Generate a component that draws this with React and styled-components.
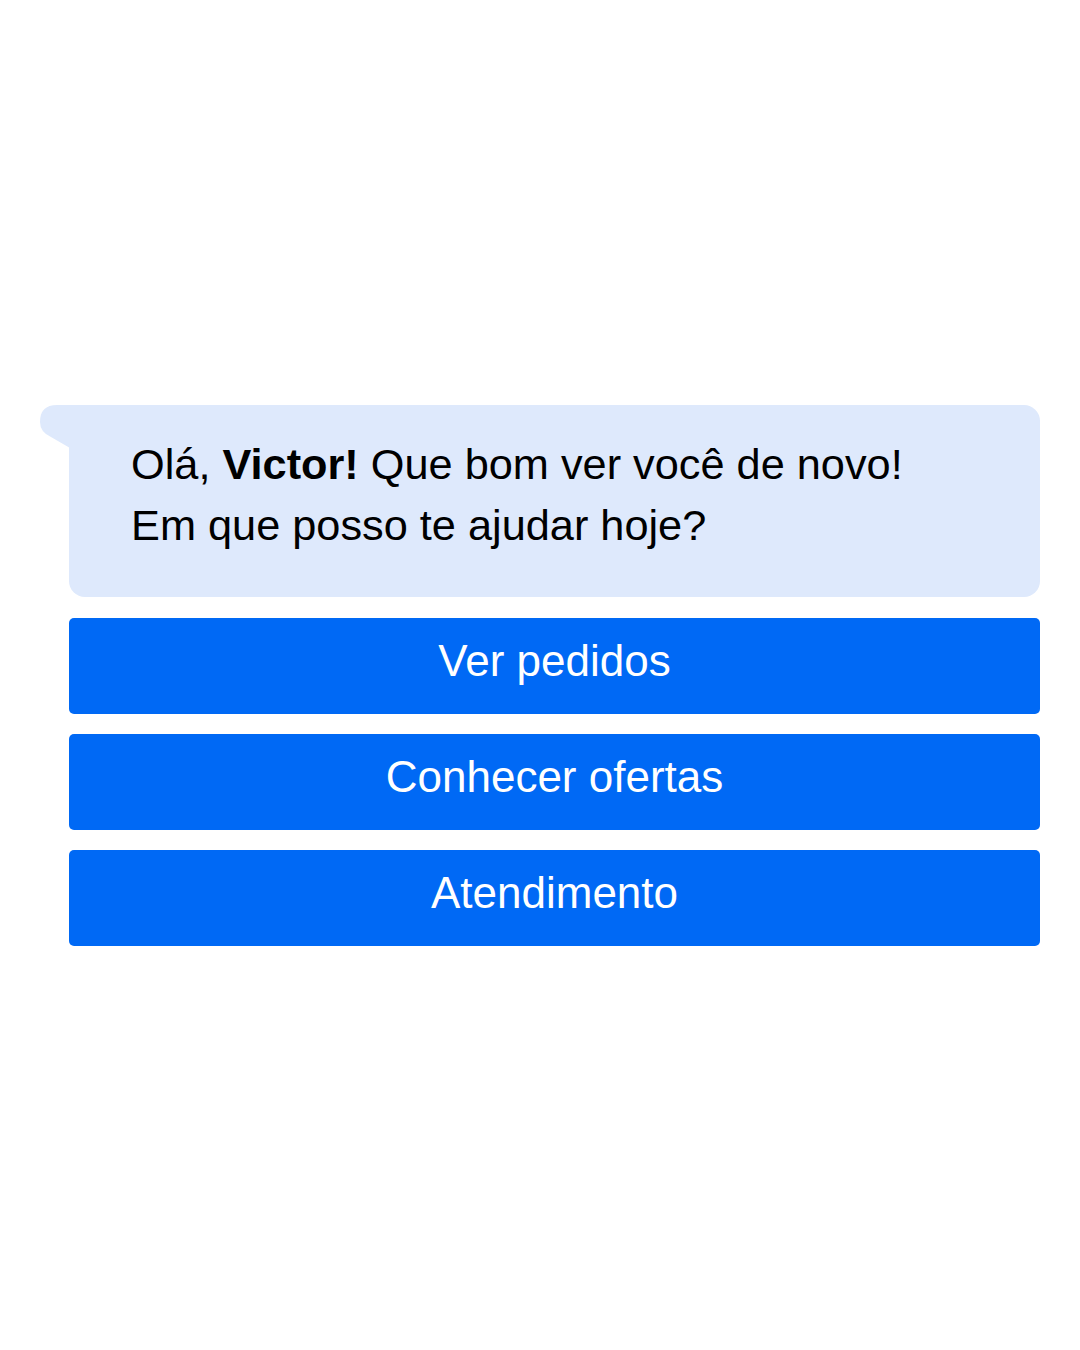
import React from 'react'
import styled, { createGlobalStyle } from 'styled-components'

const Global = createGlobalStyle`
  html, body {
    margin: 0;
    padding: 0;
    background: #ffffff;
  }
  body {
    font-family: "Liberation Sans", Arial, sans-serif;
  }
`

const Page = styled.main`
  height: 1350px;
  display: flex;
  flex-direction: column;
  justify-content: center;
  padding: 0 40px 0 69px;
  box-sizing: border-box;
`

const Chat = styled.section`
  display: flex;
  flex-direction: column;
  gap: 20px;
`

const Bubble = styled.div`
  position: relative;
  background: #dee9fc;
  border-radius: 0 16px 16px 16px;
  padding: 29px 40px 41px 62px;
  margin-bottom: 1px;
  color: #000;
  font-size: 43.3px;
  line-height: 61px;
  svg {
    position: absolute;
    left: -29px;
    top: 0;
  }
  b {
    font-weight: 700;
  }
`

const Option = styled.button`
  height: 96px;
  border: none;
  border-radius: 5px;
  background: #0069f5;
  color: #fff;
  font-family: "Liberation Sans", Arial, sans-serif;
  font-size: 44px;
  padding: 0 0 9px;
  cursor: pointer;
`

export default function App() {
  const options = ['Ver pedidos', 'Conhecer ofertas', 'Atendimento']
  return (
    <Page>
      <Global />
      <Chat>
        <Bubble>
          <svg width="30" height="44" viewBox="0 0 30 44">
            <path d="M30 0 H17 Q0 0 0 17 Q0 27 11 32 L30 43 Z" fill="#dee9fc" />
          </svg>
          Olá, <b>Victor!</b> Que bom ver você de novo!
          <br />
          Em que posso te ajudar hoje?
        </Bubble>
        {options.map((o) => (
          <Option key={o}>{o}</Option>
        ))}
      </Chat>
    </Page>
  )
}
